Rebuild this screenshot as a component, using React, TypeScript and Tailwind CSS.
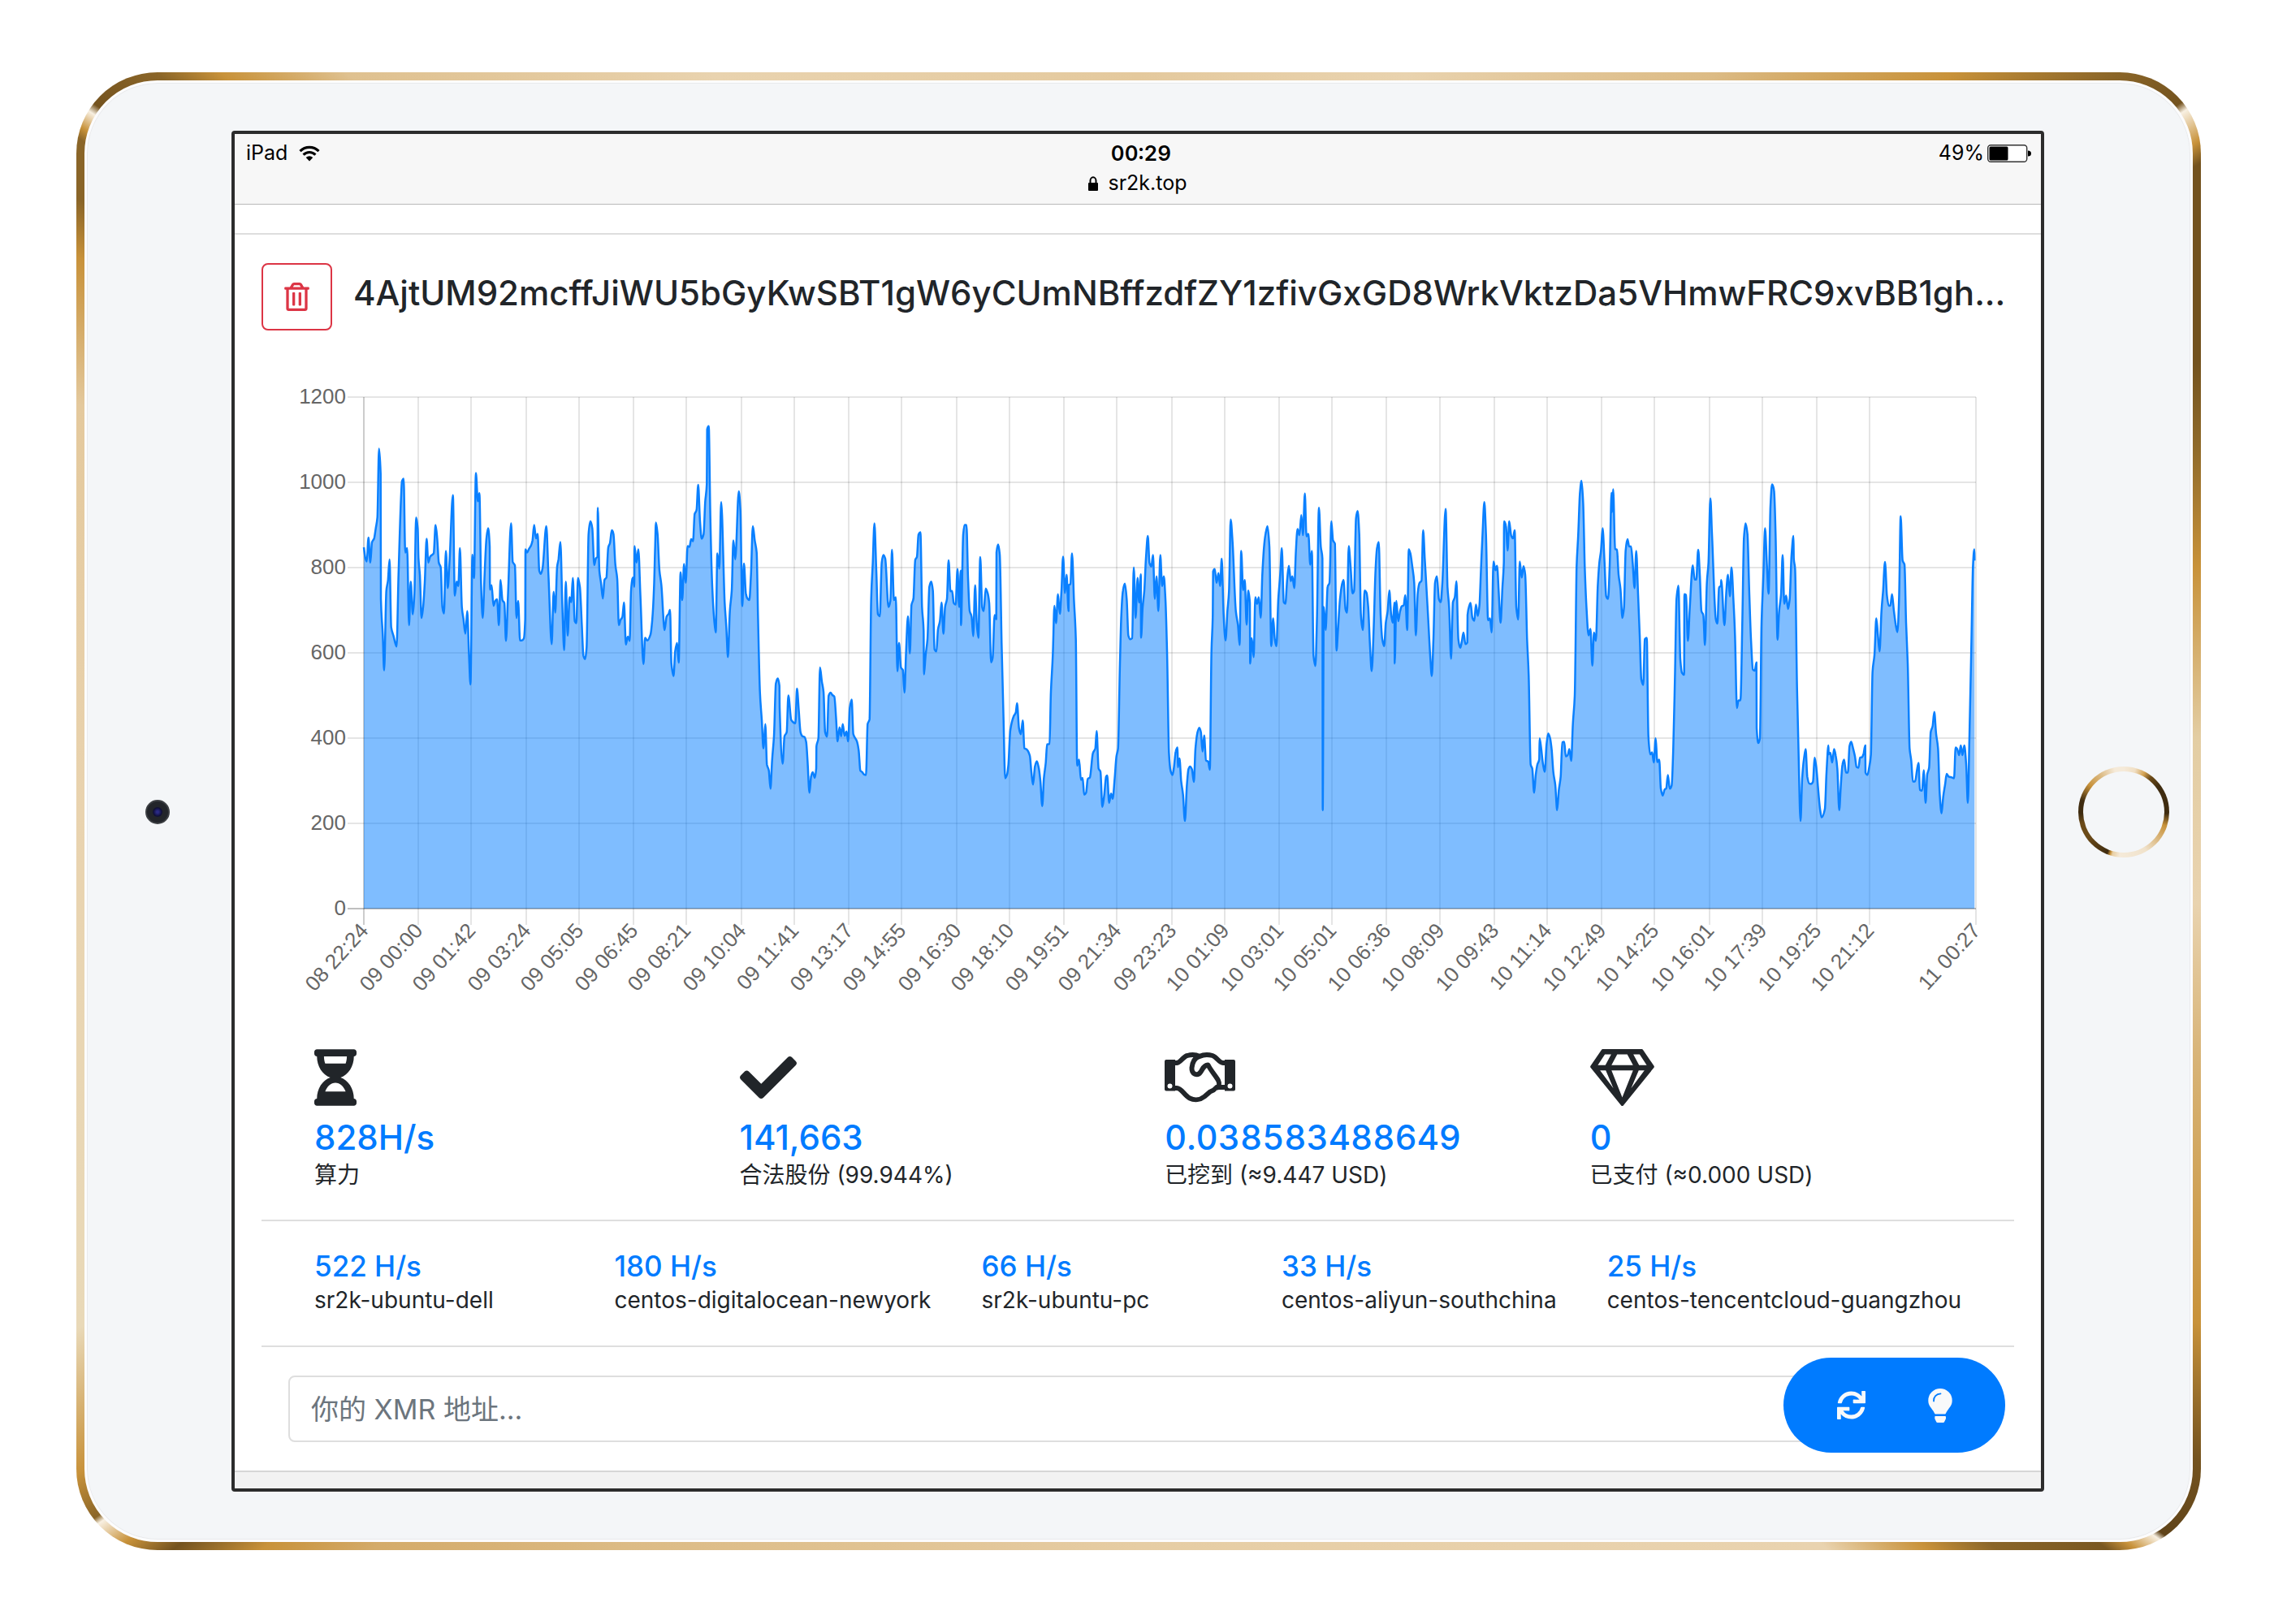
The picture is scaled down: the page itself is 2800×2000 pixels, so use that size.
import React from "react";
import { FaCheck, FaHourglassHalf, FaRegGem, FaRegTrashAlt, FaSync } from "react-icons/fa";

/* Hash-rate samples, flat x,y pairs measured on a fine raster: x in thirds of a
   plot unit, y downwards with 60 = 1200 H/s and 1327 = 0 H/s. Each block starts
   at its own x offset. */
const BLOCKS: { offset: number; points: number[] }[] = [
  {
    offset: -54,
    points: [
      54,432,60,460,65,467,71,408,78,470,84,420,92,410,98,385,104,358,110,188,116,250,117,560,124,650,129,737,137,540,143,515,149,462,155,630,163,650,175,678,182,500,192,300,195,268,201,262,207,445,214,434,221,625,227,517,235,598,241,545,247,358,253,385,256,460,261,500,267,607,273,580,279,520,286,411,292,470,299,455,312,447,319,377,325,410,331,470,338,482,344,580,350,596,357,441,364,533,371,460,383,303,390,552,397,517,403,528,409,434,416,580,422,610,429,646,436,590,442,690,448,772,455,450,461,508,468,248,475,318,481,298,487,520,493,607,500,500,507,410,513,385,519,430,520,537,526,526,533,577,540,564,546,561,553,625,559,513,566,563,573,570,579,664,586,560,598,373,604,468,612,477,618,607,624,565,631,663,638,663,645,658,650,610,651,437,657,445,664,436,672,427,677,415,683,377,690,410,696,399,702,490,708,498,714,485,728,380,736,500,748,672,755,542,761,594,768,480,773,462,780,419,787,570,794,687,800,517,807,651,814,556,820,568,826,508,833,615,839,620,845,508,852,530,859,620,865,700,871,709,877,680,884,400,891,368,898,385,905,476,911,460,917,455,918,334,924,490,930,520,937,559,943,513,950,507,957,432,963,422,970,390,976,398,983,475,990,510,996,625,1002,612,1009,605,1015,569,1022,673,1029,653,1036,664,1041,540,1046,510,1049,507,1053,530,1054,429,1061,470,1068,437,1075,540,1087,721,1093,656,1101,663,1113,648,1119,615,1126,530,1130,430,1133,371,1139,400,1146,490,1153,525,1165,637,1172,604,1180,597,1185,587,1190,720,1198,751,1204,690,1211,669,1217,718,1224,494,1230,563,1237,473,1243,520,1250,429,1257,431,1263,412,1270,417,1276,350,1283,340,1289,277,1296,370,1302,411,1309,400,1315,320,1321,275,1322,140,1328,132,1334,360,1341,530,1348,610,1354,643,1360,447,1367,485,1374,320,1387,570,1393,630,1399,704,1406,590,1413,540,1419,415,1426,462,1439,293,1445,340,1452,578,1458,472,1465,545,1471,559,1478,563,1484,500,1491,380,1498,415,1505,445,1510,600,1517,790,1524,860,1530,930,1537,870,1543,970,1550,985,1556,1030,
    ],
  },
  {
    offset: 1446,
    points: [
      62,960,69,900,76,770,83,757,89,775,90,830,101,968,108,900,116,890,122,799,133,860,148,868,154,782,161,840,167,890,174,900,182,902,188,915,193,960,200,1040,206,1000,212,989,220,1003,225,980,226,925,233,905,239,730,246,765,252,790,258,890,265,901,271,800,278,792,285,798,292,802,298,850,304,913,311,878,317,900,323,870,330,899,337,888,343,913,349,830,356,809,362,895,375,912,382,935,388,985,395,989,402,995,409,996,415,870,422,858,428,560,434,470,440,373,447,490,453,598,460,603,467,470,473,451,480,460,492,580,499,565,505,438,512,563,519,556,525,739,531,669,538,730,545,736,551,792,557,690,564,603,571,695,577,575,584,560,591,463,597,456,603,400,610,395,616,580,622,640,623,747,629,700,636,660,643,530,650,517,656,540,662,685,669,690,675,635,682,615,688,569,695,646,701,580,708,560,714,464,721,541,727,540,733,570,740,574,747,486,753,580,759,490,760,625,768,400,773,377,780,377,786,510,792,590,799,603,805,652,812,526,818,620,824,656,831,456,838,580,844,590,851,534,858,545,864,570,871,717,877,705,884,600,890,610,891,445,897,425,903,450,910,670,917,860,923,1004,930,995,935,970,942,885,955,850,962,842,967,818,974,880,981,895,988,861,994,930,1001,932,1014,948,1020,990,1026,1020,1033,975,1040,962,1047,978,1053,1010,1060,1073,1066,1005,1073,965,1078,920,1087,919,1092,790,1099,700,1105,577,1111,620,1118,548,1125,597,1131,540,1137,455,1144,545,1150,500,1157,590,1158,526,1164,523,1170,447,1177,560,1184,660,1189,973,1196,958,1203,1008,1209,1003,1215,1045,1222,1040,1228,1006,1236,1002,1247,942,1256,930,1261,887,1268,980,1275,988,1282,1075,1289,1045,1296,1000,1300,997,1307,1065,1314,1042,1320,1055,1327,1010,1334,950,1340,930,1347,720,1352,600,1358,540,1365,522,1372,560,1378,650,1385,660,1392,657,1398,482,1405,607,1412,508,1418,569,1424,499,1425,656,1431,580,1437,540,1443,460,1450,404,1456,470,1463,480,1469,451,1476,560,1482,504,1489,590,1496,451,1503,528,1509,504,1515,560,1521,690,1528,940,1534,985,1541,996,
    ],
  },
  {
    offset: 2946,
    points: [
      46,980,53,938,60,928,61,977,67,955,73,1010,80,1045,87,1110,94,1025,100,982,106,975,113,982,120,1013,126,930,133,892,140,879,146,890,152,938,158,898,165,960,173,963,179,983,185,690,190,600,191,492,197,486,204,520,211,496,217,528,223,460,230,600,237,663,244,590,250,540,256,363,263,420,275,590,283,625,289,674,295,441,302,538,308,513,315,624,321,539,327,570,328,720,334,657,341,704,347,556,354,572,360,556,367,607,373,500,380,425,386,395,392,380,399,430,406,677,413,608,419,660,425,677,432,560,439,500,445,434,452,568,458,572,465,510,471,478,478,516,484,504,491,533,497,440,503,387,510,402,517,352,523,402,530,299,536,405,543,399,550,475,556,441,562,700,569,726,575,600,582,334,589,430,595,460,596,1083,600,580,607,637,614,530,621,520,628,368,634,415,641,423,647,688,653,630,660,560,667,525,673,513,680,585,686,594,692,429,699,480,706,546,712,540,719,360,725,342,731,400,737,600,744,637,751,539,758,545,764,580,771,680,777,739,784,640,791,490,797,432,803,419,810,600,816,660,823,677,829,620,836,590,842,539,849,600,855,619,861,569,862,720,868,565,875,615,882,590,888,578,895,576,901,551,908,637,914,437,920,448,927,480,934,520,940,650,947,545,954,520,961,515,967,390,973,460,985,600,993,700,999,751,1005,660,1011,520,1018,504,1025,560,1032,568,1038,520,1050,337,1057,530,1063,580,1070,708,1077,568,1084,556,1090,516,1097,660,1104,681,1110,665,1116,643,1123,672,1130,668,1131,600,1137,578,1142,570,1149,607,1156,614,1162,574,1169,602,1175,575,1181,480,1187,390,1193,320,1199,400,1207,613,1214,608,1220,643,1227,467,1234,489,1240,478,1246,540,1253,619,1260,530,1265,470,1266,368,1273,380,1279,440,1285,368,1292,403,1299,410,1305,390,1311,580,1318,611,1324,467,1331,507,1338,479,1344,500,1351,660,1357,750,1364,970,1370,980,1377,1040,1383,995,1389,970,1396,957,1397,905,1403,930,1410,970,1416,988,1423,920,1429,893,1436,905,1442,935,1448,990,1455,1020,1462,1083,1468,1035,1475,1000,1481,915,1488,914,1494,950,1501,947,1507,932,1514,961,1520,870,
    ],
  },
  {
    offset: 4446,
    points: [
      27,800,34,480,40,400,46,300,52,267,58,320,64,480,71,590,78,650,85,634,92,725,98,643,105,664,112,530,118,470,124,440,130,385,137,470,143,553,150,560,156,480,163,297,165,345,169,288,176,436,183,438,189,500,196,535,203,607,209,580,215,440,222,412,228,430,235,430,241,470,248,533,254,441,261,550,267,650,273,760,280,773,286,660,293,656,299,900,306,945,313,940,319,965,326,905,332,964,339,958,345,1030,352,1047,359,1032,365,1029,371,996,378,1030,385,1022,391,930,397,760,403,560,410,527,417,710,423,743,431,748,432,548,438,550,445,664,452,580,463,477,470,512,476,512,483,438,489,500,495,590,502,600,508,674,515,520,521,470,528,311,534,400,548,610,554,621,560,532,567,527,568,513,580,625,587,540,593,500,600,554,606,482,613,560,619,650,626,830,632,811,639,811,646,620,652,410,658,373,665,400,672,550,678,660,685,735,692,738,698,717,699,880,705,917,711,905,717,620,724,500,730,385,737,480,743,547,750,330,756,276,763,290,769,400,776,661,782,590,789,550,795,451,801,572,808,552,815,585,821,560,828,450,835,404,836,460,841,485,848,780,854,950,861,1110,867,1005,873,960,880,932,886,1000,893,1017,900,1018,907,1013,913,953,919,975,926,1030,933,1080,939,1101,951,1080,957,990,964,923,965,945,971,941,978,965,985,932,991,948,997,980,1004,1083,1010,1020,1016,970,1022,958,1029,990,1036,990,1042,925,1048,914,1055,930,1062,950,1068,976,1075,978,1081,953,1088,952,1094,943,1100,923,1101,990,1108,996,1114,980,1121,945,1127,740,1134,700,1141,608,1147,650,1153,690,1160,590,1166,540,1173,468,1180,550,1187,577,1193,576,1199,548,1206,590,1213,625,1219,642,1225,560,1231,355,1238,465,1245,475,1251,620,1257,720,1264,930,1270,960,1276,1012,1284,1012,1291,985,1297,966,1302,1033,1310,1035,1316,984,1323,1065,1329,995,1336,978,1342,890,1349,875,1355,840,1362,895,1369,930,1375,1040,1382,1091,1388,1050,1395,1020,1401,993,1408,1000,1420,1002,1428,1004,1434,928,1440,932,1447,947,1453,923,1459,947,1466,923,1473,970,1479,1065,1485,900,1492,680,1498,480,1503,437,1504,465,
    ],
  },
];

const PLOT = { left: 126, top: 50, width: 1985, height: 630 };
const BOTTOM = PLOT.top + PLOT.height;

function samples(): [number, number][] {
  const out: [number, number][] = [];
  for (const { offset, points } of BLOCKS) {
    for (let i = 0; i < points.length; i += 2) {
      out.push([
        PLOT.left + (points[i] + offset) / 3,
        PLOT.top + ((points[i + 1] - 60) / 1267) * PLOT.height,
      ]);
    }
  }
  return out;
}

/* Monotone cubic interpolation through the samples. */
function curve(p: [number, number][]): string {
  const n = p.length;
  const slope: number[] = [];
  for (let i = 0; i < n - 1; i++) slope.push((p[i + 1][1] - p[i][1]) / (p[i + 1][0] - p[i][0]));
  const tangent = p.map((_, i) => {
    if (i === 0) return slope[0];
    if (i === n - 1) return slope[n - 2];
    const a = slope[i - 1];
    const b = slope[i];
    return a * b <= 0 ? 0 : (2 * a * b) / (a + b);
  });
  let d = `M${p[0][0].toFixed(1)} ${p[0][1].toFixed(1)}`;
  for (let i = 0; i < n - 1; i++) {
    const h = (p[i + 1][0] - p[i][0]) / 3;
    const c = [
      p[i][0] + h,
      p[i][1] + tangent[i] * h,
      p[i + 1][0] - h,
      p[i + 1][1] - tangent[i + 1] * h,
      p[i + 1][0],
      p[i + 1][1],
    ];
    d += "C" + c.map((v) => v.toFixed(1)).join(" ");
  }
  return d;
}

const LINE = curve(samples());
const AREA = `${LINE}V${BOTTOM}H${PLOT.left}Z`;

const Y_TICKS = [0, 200, 400, 600, 800, 1000, 1200];
const X_TICKS: [number, string][] = [
  [0, "08 22:24"], [67, "09 00:00"], [132, "09 01:42"], [200, "09 03:24"], [265, "09 05:05"],
  [332, "09 06:45"], [397, "09 08:21"], [465, "09 10:04"], [530, "09 11:41"], [597, "09 13:17"],
  [662, "09 14:55"], [730, "09 16:30"], [795, "09 18:10"], [862, "09 19:51"], [927, "09 21:34"],
  [995, "09 23:23"], [1060, "10 01:09"], [1127, "10 03:01"], [1192, "10 05:01"], [1259, "10 06:36"],
  [1325, "10 08:09"], [1392, "10 09:43"], [1457, "10 11:14"], [1524, "10 12:49"], [1589, "10 14:25"],
  [1657, "10 16:01"], [1722, "10 17:39"], [1789, "10 19:25"], [1854, "10 21:12"], [1985, "11 00:27"],
];

function HashrateChart() {
  return (
    <svg viewBox="0 0 2158 816" className="mt-8 block w-full" role="img" aria-label="算力">
      <g stroke="#000" strokeOpacity="0.1" strokeWidth="2">
        {Y_TICKS.slice(1).map((v) => {
          const y = BOTTOM - (v / 1200) * PLOT.height;
          return <path key={v} d={`M${PLOT.left - 20} ${y}H${PLOT.left + PLOT.width}`} />;
        })}
        {X_TICKS.map(([x]) => (
          <path key={x} d={`M${PLOT.left + x} ${PLOT.top}V${BOTTOM + 20}`} strokeOpacity={x === 0 ? 0.2 : 0.1} />
        ))}
      </g>
      <path d={AREA} fill="#007bff" fillOpacity="0.5" />
      <path d={`M${PLOT.left - 20} ${BOTTOM}H${PLOT.left + PLOT.width}`} stroke="#000" strokeOpacity="0.25" strokeWidth="2" />
      <path d={LINE} fill="none" stroke="#0a80ff" strokeWidth="2.500" strokeLinejoin="round" />
      <g className="font-['Liberation_Sans',sans-serif]" fill="#666" fontSize="26" textAnchor="end">
        {Y_TICKS.map((v) => (
          <text key={v} x={PLOT.left - 22} y={BOTTOM - (v / 1200) * PLOT.height + 8}>
            {v}
          </text>
        ))}
        {X_TICKS.map(([x, label]) => (
          <text key={x} transform={`translate(${PLOT.left + x + 7} ${BOTTOM + 28}) rotate(-48)`}>
            {label}
          </text>
        ))}
      </g>
    </svg>
  );
}

function WifiIcon() {
  return (
    <svg viewBox="0 0 26 20" className="h-5 w-[26px]" aria-hidden="true">
      <g fill="none" stroke="#000" strokeWidth="3.2">
        <path d="M1.500 7.200a16.300 16.300 0 0 1 23 0" />
        <path d="M5.600 11.600a10.400 10.400 0 0 1 14.800 0" />
      </g>
      <path d="M8.700 15a6.200 6.200 0 0 1 8.600 0L13 19.600Z" />
    </svg>
  );
}

function LockIcon() {
  return (
    <svg viewBox="0 0 12 18" className="h-[18px] w-3" aria-hidden="true">
      <path d="M2.500 9V5.500a3.500 4.200 0 0 1 7 0V9" fill="none" stroke="#000" strokeWidth="2" />
      <rect y="8" width="12" height="10" rx="1" />
    </svg>
  );
}

function BatteryIcon() {
  return (
    <svg viewBox="0 0 54 22" className="h-[22px] w-[54px]" aria-hidden="true">
      <rect x="0.700" y="0.700" width="48" height="20.600" rx="3.500" fill="#fff" stroke="#333" strokeWidth="1.400" />
      <rect x="2.500" y="2.500" width="23" height="17" rx="1.500" />
      <path d="M50 7.500q4 0 4 3.500t-4 3.500Z" />
    </svg>
  );
}

function HandshakeIcon({ className }: { className?: string }) {
  return (
    <svg viewBox="0 0 87 70" className={className} aria-hidden="true">
      <g transform="translate(0 4)">
        <path
          fill="currentColor"
          fillRule="evenodd"
          d="M2 9h11v38.500H2q-2 0-2-2V11q0-2 2-2ZM6.500 38.500a3 3 0 1 0 0 6 3 3 0 0 0 0-6ZM74 9h11q2 0 2 2v34.500q0 2-2 2H74ZM80.500 38.500a3 3 0 1 0 0 6 3 3 0 0 0 0-6Z"
        />
        <g fill="none" stroke="currentColor" strokeWidth="6" strokeLinejoin="round">
          <path d="M12 13h3c4 0 8-8 13-9 5-1.500 10-1.500 15 1 5-2.500 11-2.500 16-1 5 1.500 8 9 13 9h3" />
          <path d="M12 44h3c6 0 9 9 16 12.500 6 3 13 2 18-2l7-6c3-1 6-3 8-5.500h11" />
          <path d="M43 5c-6 1-9 8-9.500 14-.5 8 7 11 11 5 3-4 3-8 9-8.500 4 8 10 14 12.500 19 2 4 1 8-2 9.500" />
        </g>
      </g>
    </svg>
  );
}

function BulbIcon() {
  return (
    <svg viewBox="0 0 30 42" className="h-[42px] w-[30px]" aria-hidden="true">
      <path
        fill="currentColor"
        d="M15 0A14.700 14.700 0 0 0 .3 14.700c0 6.300 3.200 8.300 5.700 12.300 1 1.600 1.600 2.600 2 3.600.2.600.6.800 1.200.8h11.600c.6 0 1-.2 1.200-.8.4-1 1-2 2-3.600 2.500-4 5.700-6 5.700-12.300A14.700 14.700 0 0 0 15 0Z"
      />
      <path d="M7 15.500c-.4-5 3.200-9 8.500-9.200" fill="none" stroke="#007bff" strokeWidth="1.800" strokeLinecap="round" />
      <path
        fill="currentColor"
        d="M9.300 34h11.800c.6 0 .9.400.9 1v1.800c0 .4-.1.700-.3 1L20 41.300c-.3.500-.6.700-1.200.7h-7.300c-.6 0-.9-.2-1.200-.7l-1.700-3.500c-.2-.3-.3-.6-.3-1V35c0-.6.400-1 1-1Z"
      />
    </svg>
  );
}

const STATS = [
  { icon: FaHourglassHalf, size: "h-[70px] w-[52px]", value: "828H/s", digits: "proportional-nums", label: "算力" },
  { icon: FaCheck, size: "h-[70px] w-[70px]", value: "141,663", digits: "proportional-nums", label: "合法股份 (99.944%)" },
  { icon: HandshakeIcon, size: "h-[70px] w-[87px]", value: "0.038583488649", digits: "tabular-nums", label: "已挖到 (≈9.447 USD)" },
  { icon: FaRegGem, size: "h-[70px] w-[79px]", value: "0", digits: "tabular-nums", label: "已支付 (≈0.000 USD)" },
];

const WORKERS = [
  ["522 H/s", "sr2k-ubuntu-dell"],
  ["180 H/s", "centos-digitalocean-newyork"],
  ["66 H/s", "sr2k-ubuntu-pc"],
  ["33 H/s", "centos-aliyun-southchina"],
  ["25 H/s", "centos-tencentcloud-guangzhou"],
];

function StatusBar() {
  return (
    <header className="grid h-[87px] grid-cols-3 items-start border-b border-[#b9b9b9] bg-[#f7f7f7] pt-[5px] text-[25px] leading-[37px] text-black">
      <div className="flex items-center gap-3.5 pl-3.5">
        <span>iPad</span>
        <WifiIcon />
      </div>
      <div className="flex flex-col items-center pl-2">
        <time className="text-[26px] font-semibold tabular-nums">00:29</time>
        <div className="flex items-center gap-3 pr-2">
          <LockIcon />
          <span>sr2k.top</span>
        </div>
      </div>
      <div className="flex items-center justify-end gap-1 pr-3">
        <span>49%</span>
        <BatteryIcon />
      </div>
    </header>
  );
}

function Screen() {
  return (
    <main className="relative min-w-0 flex-1 overflow-hidden rounded-[4px] border-4 border-[#2c2c2c] bg-white text-[#212529]">
      <StatusBar />
      <div className="h-[37px] border-b-2 border-[#dedede]" />
      <section className="px-[33px] pt-[35px]">
        <div className="flex items-start gap-[26px]">
          <button type="button" aria-label="删除" className="flex h-[83px] w-[87px] shrink-0 items-center justify-center rounded-lg border-2 border-[#dc3545] text-[#dc3545]">
            <FaRegTrashAlt className="size-[35px]" />
          </button>
          <h1 className="truncate pt-3 text-[42px] leading-[50px] font-medium">
            4AjtUM92mcffJiWU5bGyKwSBT1gW6yCUmNBffzdfZY1zfivGxGD8WrkVktzDa5VHmwFRC9xvBB1gh...
          </h1>
        </div>
        <HashrateChart />
        <div className="grid grid-cols-4 px-8 pt-[37px] pb-[34px]">
          {STATS.map(({ icon: Icon, size, value, digits, label }) => (
            <div key={label} className="px-[33px]">
              <Icon className={size} />
              <div className={`pt-[13px] text-[42px] leading-[51px] font-medium text-[#007bff] ${digits}`}>{value}</div>
              <div className="text-[28px] leading-[42px]">{label}</div>
            </div>
          ))}
        </div>
        <div className="flex border-y-2 border-[#dedede] px-[34px] pt-[34px] pb-[35px] whitespace-nowrap">
          {WORKERS.map(([rate, name]) => (
            <div key={name} className="flex-1 px-[31px]">
              <div className="text-[35px] leading-[42px] font-medium text-[#007bff]">{rate}</div>
              <div className="text-[28px] leading-[42px]">{name}</div>
            </div>
          ))}
        </div>
        <div className="px-[33px] py-[35px]">
          <input
            type="text"
            aria-label="你的 XMR 地址"
            placeholder="你的 XMR 地址..."
            className="block h-[82px] w-full rounded-lg border-2 border-[#dedede] bg-white px-[26px] text-[34px] placeholder:text-[#6c757d]"
          />
        </div>
      </section>
      <footer className="h-[22px] border-t-2 border-[#d6d6d6] bg-[#f2f2f2]" />
      <div className="absolute right-11 bottom-11 flex h-[117px] items-center rounded-full bg-[#007bff] pr-[25px] pl-7 text-[#f8f9fa]">
        <button type="button" aria-label="刷新" className="flex h-full w-[110px] items-center justify-center">
          <FaSync className="size-[35px]" />
        </button>
        <button type="button" aria-label="灯" className="flex h-full w-[110px] items-center justify-center">
          <BulbIcon />
        </button>
      </div>
    </main>
  );
}

export default function App() {
  return (
    <div className="min-h-screen bg-white pt-[89px] pr-[90px] pb-[90px] pl-[94px] font-[Inter,'Noto_Sans_CJK_SC',sans-serif]">
      <div className="rounded-[100px] bg-[conic-gradient(#e4c99d_0deg,#e9d3af_20deg,#dcbb85_38deg,#c8923a_47.800deg,#8a6528_53deg,#74531f_55.800deg,#f8f0e2_56.200deg,#c8923a_57.700deg,#74531f_58.600deg,#74531f_67deg,#8f6a2a_71deg,#c8923a_77deg,#e3cda3_86deg,#e9d3af_95deg,#d8b478_103deg,#c8923a_115.800deg,#74531f_121.500deg,#5f4319_125.200deg,#f8f0e2_125.500deg,#c8923a_126.500deg,#7a5822_127.300deg,#8a6528_130.700deg,#c8923a_133.100deg,#e9d3af_137deg,#e6cda4_180deg,#dcbb85_215deg,#d4ab6a_226deg,#c8923a_229.900deg,#74531f_232.600deg,#c8923a_234.200deg,#f8f0e2_235.600deg,#8a6528_235.900deg,#c8923a_238deg,#e9d9b8_244deg,#e9d3af_270deg,#e4c99d_291deg,#c8923a_297.600deg,#8a6528_300deg,#8a6528_302.400deg,#c8923a_302.900deg,#f8f0e2_303.700deg,#74531f_304.100deg,#8a6528_306.900deg,#c8923a_308.800deg,#dfc190_313deg,#e9d3af_330deg,#e4c99d_360deg)] p-2.5">
        <div className="flex items-center rounded-[90px] border-3 border-[#fcfcfd] bg-[#f4f6f8] py-[59px] shadow-[inset_0_0_0_1px_#e9eaec]">
          <div className="flex w-[178px] shrink-0 justify-center pt-0.5 pr-1">
            <div className="flex size-[30px] items-center justify-center rounded-full border-2 border-[#3c3f43] bg-[#22252a]">
              <div className="size-3 rounded-full bg-[radial-gradient(circle,#2a2a86_15%,#10103a_60%,#16181c_100%)]" />
            </div>
          </div>
          <Screen />
          <div className="flex w-[180px] shrink-0 justify-center pt-0.5 pl-4">
            <button
              type="button"
              aria-label="Home"
              className="size-28 rounded-full bg-[conic-gradient(#f5ead9_0deg,#f0dfc4_15deg,#d2a050_28deg,#6b4a18_38deg,#3f2c10_55deg,#3f2c10_92deg,#c8923a_108deg,#dcbb85_130deg,#f0e2cb_150deg,#f5ead9_185deg,#e8cfa4_195deg,#c8923a_198deg,#3f2c10_202deg,#6b4a18_235deg,#6b4a18_255deg,#3f2c10_268deg,#3f2c10_285deg,#c8923a_308deg,#dcbb85_328deg,#f5ead9_348deg,#f5ead9_360deg)] p-1.5"
            >
              <span className="block size-full rounded-full bg-[#f4f6f8]" />
            </button>
          </div>
        </div>
      </div>
    </div>
  );
}
